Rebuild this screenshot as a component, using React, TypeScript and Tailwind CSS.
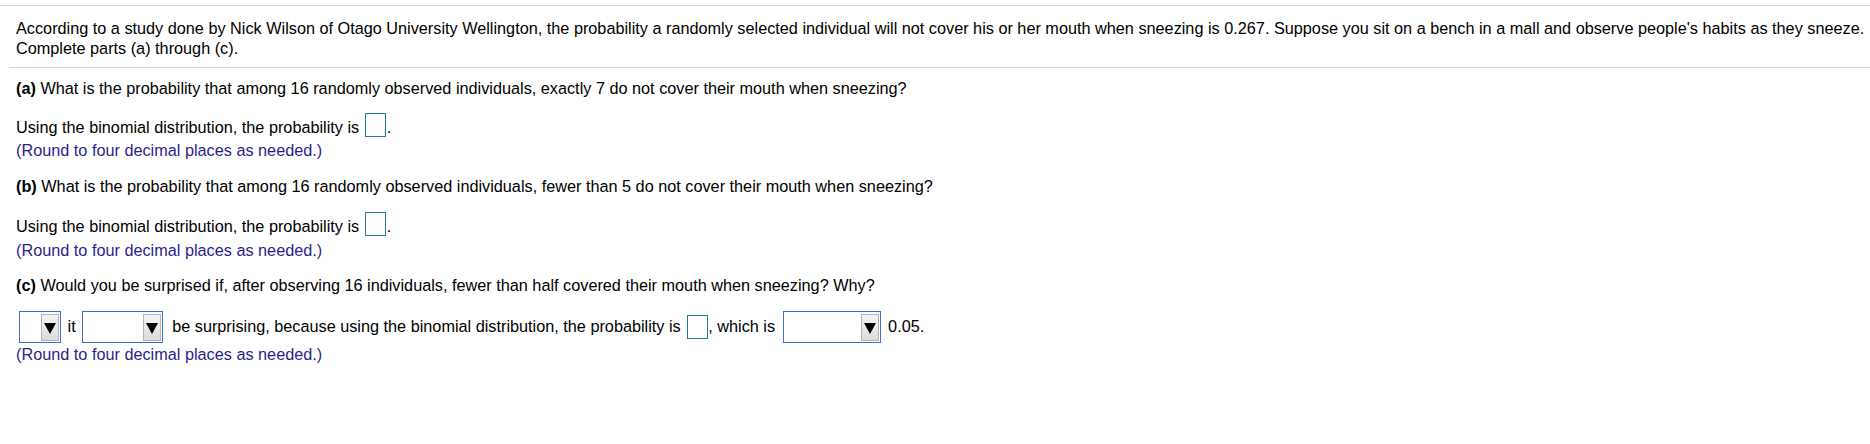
import React from "react";

function Box({ align, ml, mr }: { align: string; ml: string; mr: string }) {
  return (
    <span
      className={`inline-block w-[21px] h-[24px] border border-[#1d7f99] bg-white ${ml} ${mr} ${align}`}
    />
  );
}

function Select({ width, ml, mr }: { width: string; ml: string; mr: string }) {
  return (
    <span
      className={`inline-block overflow-hidden ${width} ${ml} ${mr} h-[32px] border border-[#3b6fd6] bg-white align-[-11px]`}
    >
      <span className="flex w-full h-full justify-end items-start pt-[2px] pr-[1px]">
        <span className="flex w-[18px] h-[27px] border border-[#b5b5b5] bg-gradient-to-b from-[#f4f4f4] to-[#dcdcdc] items-center justify-center">
          <svg width="12" height="12" viewBox="0 0 12 12">
            <polygon points="0,1 12,1 6,12" fill="#000" />
          </svg>
        </span>
      </span>
    </span>
  );
}

export default function App() {
  return (
    <div
      className="w-[1870px] h-[444px] bg-white text-black text-[16.25px] leading-[20px]"
      style={{ fontFamily: '"Liberation Sans", Arial, sans-serif' }}
    >
      <div className="pt-[5px]">
        <div className="border-t border-[#d4d4dc]" />
      </div>
      <div className="pt-[12px] pl-[16px] whitespace-nowrap">
        <p>
          According to a study done by Nick Wilson of Otago University Wellington, the probability a randomly selected individual will not cover his or her mouth when sneezing is 0.267. Suppose you sit on a bench in a mall and observe people's habits as they sneeze.
        </p>
        <p>Complete parts (a) through (c).</p>
      </div>
      <div className="mt-[9px] ml-[9px] border-t border-[#d4d4dc]" />
      <div className="pl-[16px] whitespace-nowrap">
        <p className="mt-[10px]">
          <b>(a)</b> What is the probability that among 16 randomly observed individuals, exactly 7 do not cover their mouth when sneezing?
        </p>
        <p className="mt-[15px]">
          Using the binomial distribution, the probability is{" "}
          <Box align="align-[-4px]" ml="ml-[1px]" mr="mr-[1px]" />.
        </p>
        <p className="mt-[3px] text-[#2c1e8c]">(Round to four decimal places as needed.)</p>

        <p className="mt-[16px]">
          <b>(b)</b> What is the probability that among 16 randomly observed individuals, fewer than 5 do not cover their mouth when sneezing?
        </p>
        <p className="mt-[16px]">
          Using the binomial distribution, the probability is{" "}
          <Box align="align-[-4px]" ml="ml-[1px]" mr="mr-[1px]" />.
        </p>
        <p className="mt-[4px] text-[#2c1e8c]">(Round to four decimal places as needed.)</p>

        <p className="mt-[15px]">
          <b>(c)</b> Would you be surprised if, after observing 16 individuals, fewer than half covered their mouth when sneezing? Why?
        </p>
        <p className="mt-[16px]">
          <Select width="w-[42px]" ml="ml-[3px]" mr="mr-[2px]" />
          {" it "}
          <Select width="w-[81px]" ml="ml-[2px]" mr="mr-[4.5px]" />
          {" be surprising, because using the binomial distribution, the probability is "}
          <Box align="align-[-7px]" ml="ml-[2px]" mr="mr-[0px]" />
          {", which is "}
          <Select width="w-[98px]" ml="ml-[3px]" mr="mr-[3px]" />
          {" 0.05."}
        </p>
        <p className="mt-[1px] text-[#2c1e8c]">(Round to four decimal places as needed.)</p>
      </div>
    </div>
  );
}
